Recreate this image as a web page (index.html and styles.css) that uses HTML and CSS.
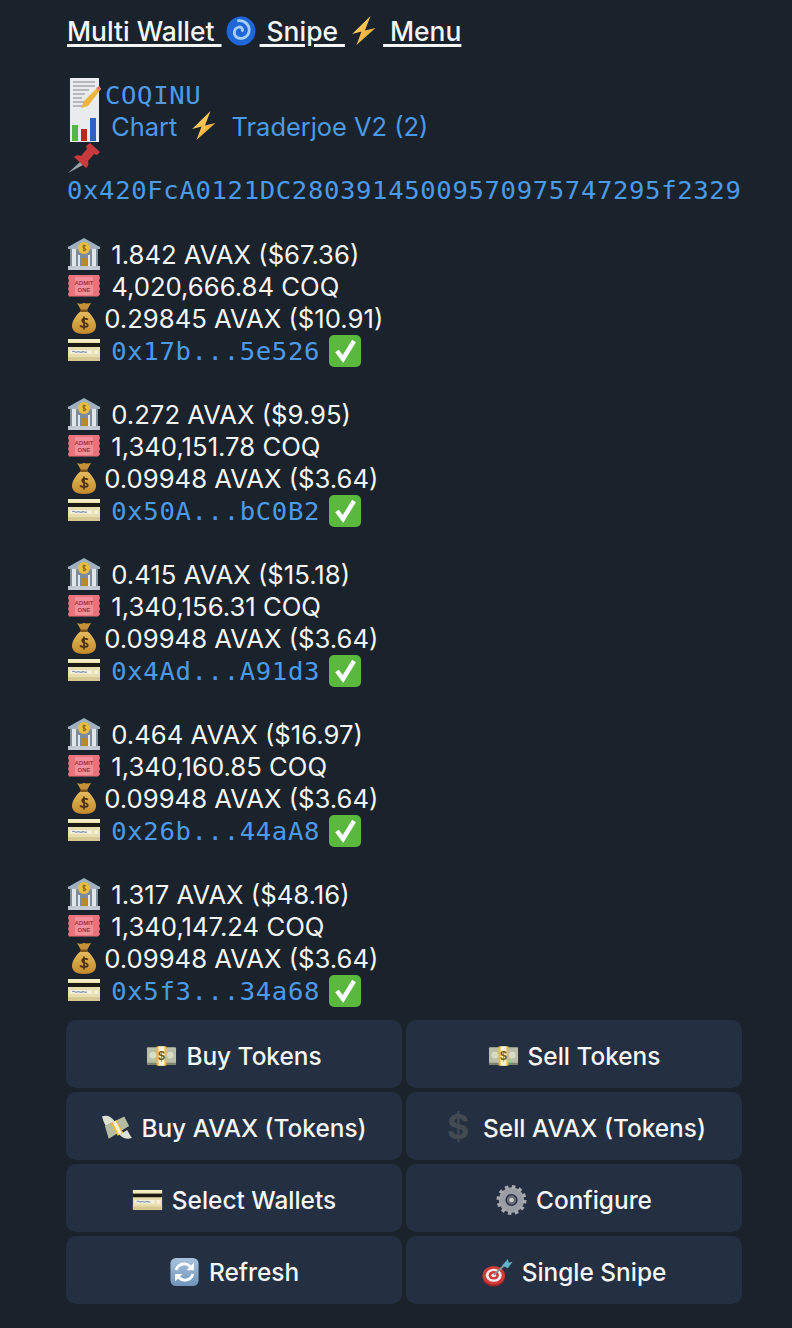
FILE: index.html
```html
<!DOCTYPE html>
<html lang="en">
<head>
  <meta charset="UTF-8" />
  <title>Multi Wallet Snipe Menu</title>
  <link rel="stylesheet" href="styles.css">
</head>
<body>
<svg class="defs" width="0" height="0">
  <defs>
    <linearGradient id="bolt-fill" x1="0" y1="0" x2="1" y2="1">
      <stop offset="0" stop-color="#ffe27a"/>
      <stop offset="1" stop-color="#ee9a22"/>
    </linearGradient>
    <linearGradient id="tile-fill" x1="0" y1="0" x2="0" y2="1">
      <stop offset="0" stop-color="#a9c3de"/>
      <stop offset="1" stop-color="#6f93bb"/>
    </linearGradient>
    <linearGradient id="bag-fill" x1="0" y1="0" x2="0" y2="1">
      <stop offset="0" stop-color="#e6bd5c"/>
      <stop offset="1" stop-color="#c48a2c"/>
    </linearGradient>
    <symbol id="bank" viewBox="0 0 34 32">
      <path d="M17 0 33 9v2H1V9z" fill="#9fb0bd"/>
      <rect x="3" y="11" width="28" height="17" fill="#7d8c99"/>
      <path d="M5 11h4v17H5zM25 11h4v17h-4zM11 17h2v11h-2zM21 17h2v11h-2z" fill="#e1e6ea"/>
      <rect x="14" y="20" width="6" height="8" fill="#b58a2e"/>
      <circle cx="17" cy="10" r="6" fill="#e9bd3f"/>
      <path d="M19 8c-3-1.500-4.500 1-2 2 3 .7 2.500 3-.5 2.400M17 6.500v7" stroke="#7c5a14" fill="none"/>
      <rect x="1" y="28" width="32" height="4" fill="#c3ccd3"/>
    </symbol>
    <symbol id="ticket" viewBox="0 0 34 24">
      <path d="M2 1h30l1 3-1 2.500 1 3-1 2.500 1 3-1 2.500 1 3-2 2H2l-1-2 1-3-1-2.500 1-3-1-2.500 1-3-1-2.500z" fill="#e9727d"/>
      <rect x="8" y="3" width="18" height="18" fill="#f08f97"/>
      <text class="ticket-text" x="17" y="11">ADMIT</text>
      <text class="ticket-text" x="17" y="18">ONE</text>
    </symbol>
    <symbol id="bag" viewBox="0 0 26 32">
      <path d="M6 1c3 1 4 1 7 0 3 1 5 0 7 0l-4 7h-6z" fill="#c4913a"/>
      <path d="M10 9h6c5 4 9 10 9 15 0 5-4 8-12 8S1 29 1 24c0-5 4-11 9-15z" fill="url(#bag-fill)"/>
      <path d="M9.500 7.500h7v2.500h-7z" fill="#7d5518"/>
      <path d="M13 14.500v13M17 17.500c-5-2.500-8 1-4 3 5 1.500 5 4.500 0 4.500-1.500 0-3 0-4-1.500" stroke="#4e3510" stroke-width="1.800" fill="none"/>
    </symbol>
    <symbol id="card" viewBox="0 0 34 24">
      <rect x="1" y="1" width="32" height="22" rx="1" fill="#e8dfae"/>
      <rect x="1" y="1" width="32" height="3" fill="#f4edc4"/>
      <rect x="1" y="5" width="32" height="4" fill="#1d1a14"/>
      <rect x="3" y="12" width="22" height="4" fill="#f3f0dc"/>
      <path d="M5 14c2-2 3 1 5 0s3 1 5 0 3 1 5 0" stroke="#5a72a8" fill="none"/>
      <rect x="27" y="12" width="4" height="4" fill="#f3f0dc"/>
      <rect x="1" y="19" width="32" height="4" fill="#d6ca92"/>
    </symbol>
    <symbol id="check" viewBox="0 0 34 34">
      <rect x="1" y="1" width="32" height="32" rx="5" fill="#5bb83f"/>
      <path d="M9 17l6 8L26 7" stroke="#fff" stroke-width="4.500" fill="none"/>
    </symbol>
    <symbol id="bolt" viewBox="0 0 25 30">
      <path d="M19 0 .7 18l9.300-2.500L5 29 24 12l-10.500 2.500z" fill="url(#bolt-fill)"/>
    </symbol>
    <symbol id="cash" viewBox="0 0 32 24">
      <rect x="1" y="3" width="30" height="18" rx="1" fill="#b9bfa8"/>
      <rect x="1" y="19" width="30" height="2" fill="#7b8070"/>
      <circle cx="7" cy="11" r="3.500" fill="#d9ddc8"/>
      <circle cx="25" cy="11" r="3.500" fill="#d9ddc8"/>
      <rect x="11" y="2" width="10" height="20" fill="#f0bf2e"/>
      <rect x="13" y="2" width="6" height="20" fill="#f6f2de"/>
      <text class="bill-text" x="16" y="16">$</text>
    </symbol>
  </defs>
</svg>

<main class="message">
  <p class="title">Multi Wallet <svg class="ico ico-title" viewBox="0 0 28 28"><circle cx="14" cy="14" r="13.500" fill="#1f66d8"/><path d="M14.500 14.500c2-2 0-5-3-4-4 1-5 6-2 9 4 3 11 1 12-5 1-6-4-11-11-10" stroke="#a6d0f5" stroke-width="2.600" fill="none"/></svg> Snipe <svg class="ico ico-title"><use href="#bolt"/></svg> Menu</p>

  <div class="block head">
    <div class="line"><svg class="ico ico-lg" viewBox="0 0 34 34"><rect x="3" y="1" width="29" height="33" fill="#e9ecee"/><path d="M6 5h22M6 9h22M6 13h16M6 17h12M6 21h9M6 25h14M6 29h10" stroke="#7f858c"/><path d="M32 9 17 24l-3 7 7-2L34 12z" fill="#edb43f"/><path d="M32 9l2 3 -2 2-3-3z" fill="#e2747c"/></svg><span class="link mono">COQINU</span></div>
    <div class="line"><svg class="ico ico-lg ico-chart" viewBox="0 0 34 34"><rect x="3" y="1" width="29" height="32" fill="#e9ecee"/><rect x="5" y="16" width="6" height="16" fill="#56b544"/><rect x="14" y="20" width="6" height="12" fill="#b8281e"/><rect x="23" y="9" width="6" height="23" fill="#2c62c0"/></svg> <span class="link chart-link">Chart <svg class="ico ico-title ico-inline"><use href="#bolt"/></svg> Traderjoe V2 (2)</span></div>
    <div class="line"><svg class="ico ico-lg" viewBox="0 0 34 32"><path d="M13 20 1 31l15-8z" fill="#9aa0a6"/><path d="M23 1l10 9-3 3-3-1-6 7c1 3 0 6-2 7L7 15c2-2 5-2 7-1l6-7-1-3z" fill="#c93a3c"/></svg></div>
    <div class="line line-address"><span class="link mono">0x420FcA0121DC28039145009570975747295f2329</span></div>
  </div>

  <div class="block">
    <div class="line"><svg class="ico ico-wide"><use href="#bank"/></svg> 1.842 AVAX ($67.36)</div>
    <div class="line"><svg class="ico ico-wide"><use href="#ticket"/></svg> 4,020,666.84 COQ</div>
    <div class="line"><svg class="ico ico-bag"><use href="#bag"/></svg> 0.29845 AVAX ($10.91)</div>
    <div class="line"><svg class="ico ico-wide"><use href="#card"/></svg> <span class="link mono">0x17b...5e526</span> <svg class="ico ico-check"><use href="#check"/></svg></div>
  </div>

  <div class="block">
    <div class="line"><svg class="ico ico-wide"><use href="#bank"/></svg> 0.272 AVAX ($9.95)</div>
    <div class="line"><svg class="ico ico-wide"><use href="#ticket"/></svg> 1,340,151.78 COQ</div>
    <div class="line"><svg class="ico ico-bag"><use href="#bag"/></svg> 0.09948 AVAX ($3.64)</div>
    <div class="line"><svg class="ico ico-wide"><use href="#card"/></svg> <span class="link mono">0x50A...bC0B2</span> <svg class="ico ico-check"><use href="#check"/></svg></div>
  </div>

  <div class="block">
    <div class="line"><svg class="ico ico-wide"><use href="#bank"/></svg> 0.415 AVAX ($15.18)</div>
    <div class="line"><svg class="ico ico-wide"><use href="#ticket"/></svg> 1,340,156.31 COQ</div>
    <div class="line"><svg class="ico ico-bag"><use href="#bag"/></svg> 0.09948 AVAX ($3.64)</div>
    <div class="line"><svg class="ico ico-wide"><use href="#card"/></svg> <span class="link mono">0x4Ad...A91d3</span> <svg class="ico ico-check"><use href="#check"/></svg></div>
  </div>

  <div class="block">
    <div class="line"><svg class="ico ico-wide"><use href="#bank"/></svg> 0.464 AVAX ($16.97)</div>
    <div class="line"><svg class="ico ico-wide"><use href="#ticket"/></svg> 1,340,160.85 COQ</div>
    <div class="line"><svg class="ico ico-bag"><use href="#bag"/></svg> 0.09948 AVAX ($3.64)</div>
    <div class="line"><svg class="ico ico-wide"><use href="#card"/></svg> <span class="link mono">0x26b...44aA8</span> <svg class="ico ico-check"><use href="#check"/></svg></div>
  </div>

  <div class="block last">
    <div class="line"><svg class="ico ico-wide"><use href="#bank"/></svg> 1.317 AVAX ($48.16)</div>
    <div class="line"><svg class="ico ico-wide"><use href="#ticket"/></svg> 1,340,147.24 COQ</div>
    <div class="line"><svg class="ico ico-bag"><use href="#bag"/></svg> 0.09948 AVAX ($3.64)</div>
    <div class="line"><svg class="ico ico-wide"><use href="#card"/></svg> <span class="link mono">0x5f3...34a68</span> <svg class="ico ico-check"><use href="#check"/></svg></div>
  </div>
</main>

<div class="keyboard">
  <button class="key"><svg class="ico-btn"><use href="#cash"/></svg> Buy Tokens</button>
  <button class="key"><svg class="ico-btn"><use href="#cash"/></svg> Sell Tokens</button>
  <button class="key"><svg class="ico-btn" viewBox="0 0 32 30"><path d="M1 3c5-2 10 0 13 5l-9 5C3 10 2 6 1 3zM32 25c-4 2-9 1-13-3l8-5c2 3 3 6 5 8z" fill="#dde1d2"/><path d="M4 13 24 3l5 10-21 13z" fill="#b5bca2"/><path d="M10 10l6-3 7 13-6 3z" fill="#efbe2f"/><path d="M12 9l3-1.500 6.500 13-3 1.500z" fill="#f6f2de"/></svg> Buy AVAX (Tokens)</button>
  <button class="key"><span class="dollar">$</span> Sell AVAX (Tokens)</button>
  <button class="key"><svg class="ico-btn"><use href="#card"/></svg> Select Wallets</button>
  <button class="key"><svg class="ico-btn" viewBox="0 0 32 32"><circle cx="16" cy="16" r="10" fill="none" stroke="#9a9ea4" stroke-width="7"/><circle cx="16" cy="16" r="14" fill="none" stroke="#a7abb0" stroke-width="4" stroke-dasharray="3.600 3.730"/><circle cx="16" cy="16" r="5" fill="#6a6e74"/><circle cx="16" cy="16" r="2.500" fill="#c8cbce"/></svg> Configure</button>
  <button class="key"><svg class="ico-btn" viewBox="0 0 32 32"><rect x="1" y="1" width="30" height="30" rx="6" fill="url(#tile-fill)"/><path d="M7 14a9 9 0 0 1 15-4M25 18a9 9 0 0 1-15 4" stroke="#fff" stroke-width="3" fill="none"/><path d="M18 14h8V6zM14 18H6v8z" fill="#fff"/></svg> Refresh</button>
  <button class="key"><svg class="ico-btn" viewBox="0 0 32 32"><ellipse cx="12" cy="21" rx="12" ry="10.500" fill="#9c2326"/><ellipse cx="12" cy="19.500" rx="12" ry="10" fill="#d23a3a"/><ellipse cx="12" cy="19.500" rx="8.500" ry="7" fill="#f3eeee"/><ellipse cx="12" cy="19.500" rx="5.500" ry="4.500" fill="#d23a3a"/><ellipse cx="12" cy="19.500" rx="2.500" ry="2" fill="#f3eeee"/><path d="M12 19 23 9" stroke="#8b8f94" stroke-width="2"/><path d="M21 9l6-7 1 4 4-1-5 7z" fill="#5fb6c9"/></svg> Single Snipe</button>
</div>
</body>
</html>
```

FILE: styles.css
```css
* {
  box-sizing: border-box;
}

body {
  margin: 0;
  height: 1328px;
  background: #1a222c;
  color: #f5f6f7;
  font-family: "Inter", "Liberation Sans", sans-serif;
  font-size: 25.7px;
  line-height: 32px;
  overflow: hidden;
}

.defs {
  display: block;
}

.message {
  padding: 15px 0 0 67px;
}

.title {
  margin: 0 0 30px;
  font-size: 26.4px;
  font-weight: 500;
  text-decoration: underline;
  text-decoration-thickness: 2.5px;
  text-underline-offset: 3px;
}

.block {
  margin-bottom: 32px;
}

.block.head {
  margin-bottom: 33px;
}

.block.last {
  margin-bottom: 14px;
}

.line {
  height: 32px;
  white-space: nowrap;
}

.line-address {
  padding-top: 1px;
}

.link {
  color: #4c9be8;
}

.chart-link {
  font-size: 25.4px;
}

.mono {
  font-family: "DejaVu Sans Mono", "Liberation Mono", monospace;
  font-size: 25.6px;
  letter-spacing: 0.65px;
}

.ico {
  display: inline-block;
  width: 34px;
  height: 32px;
  vertical-align: -6px;
}

.ico-wide {
  margin-right: 3px;
}

.ico-bag {
  width: 26px;
  margin-left: 4px;
}

.ico-title {
  height: 30px;
  margin: 0 2px;
  vertical-align: -5px;
}

.ico-inline {
  margin: 0 3px;
}

.ico-lg {
  height: 34px;
  margin-right: 4px;
  vertical-align: -7px;
}

.ico-chart {
  margin-right: 3px;
}

.ico-check {
  height: 34px;
  margin-left: 1px;
  vertical-align: -8px;
}

.ticket-text {
  font-family: "Liberation Sans", sans-serif;
  font-size: 6px;
  font-weight: 700;
  text-anchor: middle;
  fill: #a8323c;
}

.bill-text {
  font-family: "Liberation Sans", sans-serif;
  font-size: 13px;
  font-weight: 700;
  text-anchor: middle;
  fill: #7c5a14;
}

.keyboard {
  display: grid;
  grid-template-columns: 336px 336px;
  grid-auto-rows: 68px;
  gap: 4px;
  padding-left: 66px;
}

.key {
  display: flex;
  align-items: center;
  justify-content: center;
  gap: 9px;
  padding: 3px 0 0;
  border: 0;
  border-radius: 10px;
  background: #243041;
  color: #f5f6f7;
  font-family: "Inter", "Liberation Sans", sans-serif;
  font-size: 24.4px;
  font-weight: 500;
}

.ico-btn {
  width: 31px;
  height: 30px;
}

.dollar {
  width: 32px;
  margin-top: -3px;
  text-align: center;
  font-size: 34px;
  font-weight: 700;
  color: #434a52;
}
```
